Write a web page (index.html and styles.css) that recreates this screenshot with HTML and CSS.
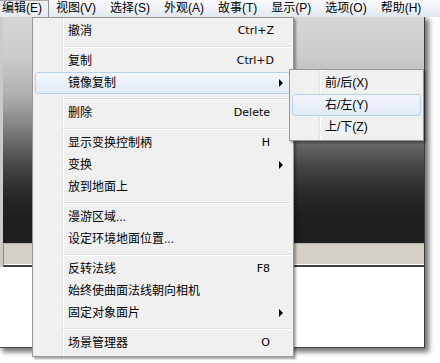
FILE: index.html
```html
<!DOCTYPE html>
<html lang="zh-CN">
<head>
<meta charset="utf-8">
<title>编辑菜单</title>
<link rel="stylesheet" href="styles.css">
</head>
<body>
<div class="screen">
  <div class="menubar">
    <span class="mb-item active">编辑(E)</span>
    <span class="mb-item">视图(V)</span>
    <span class="mb-item">选择(S)</span>
    <span class="mb-item">外观(A)</span>
    <span class="mb-item">故事(T)</span>
    <span class="mb-item">显示(P)</span>
    <span class="mb-item">选项(O)</span>
    <span class="mb-item">帮助(H)</span>
  </div>
  <div class="window">
    <div class="upper">
      <div class="frame-left"></div>
      <div class="upper-main">
        <div class="viewport"></div>
        <div class="statusbar"></div>
      </div>
    </div>
    <div class="canvas"></div>
  </div>

  <div class="menu main-menu">
    <div class="item"><span class="label">撤消</span><span class="key ctrl">Ctrl+Z</span></div>
    <div class="sep"></div>
    <div class="item"><span class="label">复制</span><span class="key ctrl">Ctrl+D</span></div>
    <div class="item hot"><span class="label">镜像复制</span><span class="arrow"></span></div>
    <div class="sep"></div>
    <div class="item"><span class="label">删除</span><span class="key">Delete</span></div>
    <div class="sep"></div>
    <div class="item"><span class="label">显示变换控制柄</span><span class="key">H</span></div>
    <div class="item"><span class="label">变换</span><span class="arrow"></span></div>
    <div class="item"><span class="label">放到地面上</span></div>
    <div class="sep"></div>
    <div class="item"><span class="label">漫游区域...</span></div>
    <div class="item"><span class="label">设定环境地面位置...</span></div>
    <div class="sep"></div>
    <div class="item"><span class="label">反转法线</span><span class="key">F8</span></div>
    <div class="item"><span class="label">始终使曲面法线朝向相机</span></div>
    <div class="item"><span class="label">固定对象面片</span><span class="arrow"></span></div>
    <div class="sep"></div>
    <div class="item"><span class="label">场景管理器</span><span class="key">O</span></div>
  </div>

  <div class="menu sub-menu">
    <div class="item"><span class="label">前/后(X)</span></div>
    <div class="item hot"><span class="label">右/左(Y)</span></div>
    <div class="item"><span class="label">上/下(Z)</span></div>
  </div>
</div>
</body>
</html>
```
FILE: styles.css
```css
html, body {
  margin: 0;
  padding: 0;
  background: #ffffff;
}

.screen {
  position: relative;
  width: 440px;
  height: 363px;
  overflow: hidden;
  background: #ffffff;
  font-family: "Liberation Sans", "Noto Sans CJK SC", sans-serif;
  font-size: 12px;
  color: #000;
}

/* ---------- menubar ---------- */
.menubar {
  position: relative;
  z-index: 2;
  display: flex;
  height: 17px;
  background: linear-gradient(to bottom, #f8f9fb 0%, #eef2f7 50%, #e1e7ef 100%);
}

.mb-item {
  padding: 0 7px;
  line-height: 17px;
  white-space: nowrap;
}

.mb-item:first-child {
  padding-left: 2px;
}

.mb-item.active {
  background: linear-gradient(to bottom, #f2f4f7, #e6eaf0);
  box-shadow: inset -1px 0 #8e9094, inset 0 1px #a9abae;
}

/* ---------- window behind ---------- */
.window {
  position: relative;
  z-index: 1;
  box-sizing: border-box;
  width: 425px;
  height: 331px;
  display: flex;
  flex-direction: column;
  border-right: 1px solid #3c3c3c;
  border-bottom: 1px solid #4a4a4a;
  box-shadow: 3px 3px 5px 1px rgba(0, 0, 0, 0.55);
  background: #fff;
}

.upper {
  display: flex;
  height: 250px;
}

.frame-left {
  width: 3px;
  background: #cbcac6;
}

.upper-main {
  flex: 1;
  display: flex;
  flex-direction: column;
}

.viewport {
  height: 226px;
  background: linear-gradient(to bottom,
    #d6d6d6 0%,
    #cbcbcb 18%,
    #acacac 36%,
    #767676 52%,
    #454545 66%,
    #262626 80%,
    #1e1e1e 90%,
    #1e1e1e 100%);
}

.statusbar {
  box-sizing: border-box;
  height: 24px;
  background: #d4d0c8;
  border-top: 1px solid #b4b4b4;
  border-left: 1px solid #8c8c8c;
  border-bottom: 2px solid #3e3e3e;
  box-shadow: inset 0 -1px #ffffff;
}

.canvas {
  flex: 1;
  background: #ffffff;
}

/* ---------- menus ---------- */
.menu {
  position: absolute;
  z-index: 5;
  box-sizing: border-box;
  border: 1px solid #979797;
  padding: 2px;
  background-color: #f0f0f0;
  background-image: linear-gradient(to right,
    transparent 29px,
    #e2e3e3 29px, #e2e3e3 30px,
    #ffffff 30px, #ffffff 31px,
    transparent 31px);
  box-shadow: 2px 2px 2px rgba(0, 0, 0, 0.35);
}

.main-menu {
  left: 32px;
  top: 17px;
  width: 262px;
  height: 340px;
}

.sub-menu {
  z-index: 6;
  left: 289px;
  top: 69px;
  width: 135px;
  height: 72px;
}

.item {
  box-sizing: border-box;
  display: flex;
  align-items: center;
  height: 22px;
  padding-left: 32px;
  border: 1px solid transparent;
  border-radius: 3px;
  white-space: nowrap;
}

.sub-menu .item {
  padding-left: 32px;
}

.item .label {
  flex: 1;
  line-height: 20px;
}

.item.hot {
  border-color: #b4d0ef;
  background: linear-gradient(to bottom, #f4f7fc 0%, #eaf0f9 50%, #e1eaf6 100%);
}

.key {
  font-family: "DejaVu Sans", sans-serif;
  font-size: 11px;
  line-height: 20px;
  margin-right: 20px;
}

.key.ctrl {
  margin-right: 16px;
}

.arrow {
  width: 0;
  height: 0;
  border-style: solid;
  border-width: 4px 0 4px 4px;
  border-color: transparent transparent transparent #000;
  margin-right: 7px;
}

.sep {
  height: 8px;
  margin-left: 28px;
  background: linear-gradient(to bottom,
    transparent 4px,
    #e0e0e0 4px, #e0e0e0 5px,
    #ffffff 5px, #ffffff 6px,
    transparent 6px);
}
```
